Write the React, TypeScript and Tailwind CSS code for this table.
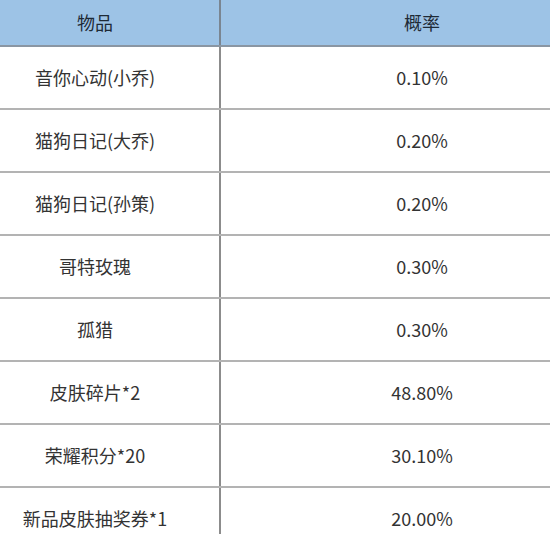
import React from "react";

const rows: [string, string][] = [
  ["音你心动(小乔)", "0.10%"],
  ["猫狗日记(大乔)", "0.20%"],
  ["猫狗日记(孙策)", "0.20%"],
  ["哥特玫瑰", "0.30%"],
  ["孤猎", "0.30%"],
  ["皮肤碎片*2", "48.80%"],
  ["荣耀积分*20", "30.10%"],
  ["新品皮肤抽奖券*1", "20.00%"],
];

export default function App() {
  return (
    <div
      className="w-[550px] h-[534px] overflow-hidden bg-white text-[18px] text-[#333]"
      style={{ fontFamily: '"Noto Sans CJK SC", "Noto Sans", sans-serif' }}
    >
      <div className="ml-[-29px] w-[652px]">
        {/* header */}
        <div className="flex h-[47px] bg-[#9dc3e6] border-b-2 border-[#8a96a3] text-[#1e2a36]">
          <div className="w-[250px] flex items-center justify-center border-r-2 border-[#7a8591]">物品</div>
          <div className="flex-1 flex items-center justify-center">概率</div>
        </div>

        {rows.map(([name, rate]) => (
          <div key={name} className="flex h-[63px] border-b-2 border-[#b3b3b3]">
            <div className="w-[250px] flex items-center justify-center border-r-2 border-[#8c8c8c]">{name}</div>
            <div className="flex-1 flex items-center justify-center">{rate}</div>
          </div>
        ))}
      </div>
    </div>
  );
}
